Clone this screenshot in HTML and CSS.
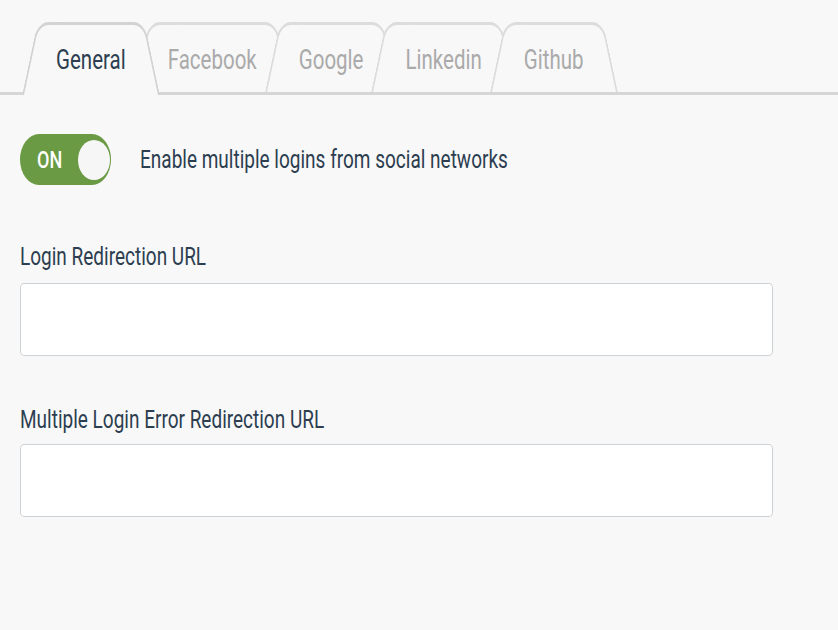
FILE: index.html
```html
<!DOCTYPE html>
<html lang="en">
<head>
  <meta charset="UTF-8">
  <meta name="viewport" content="width=device-width, initial-scale=1.0">
  <title>Social Login Settings</title>
  <link rel="stylesheet" href="styles.css">
</head>
<body>
  <nav class="tabs">
    <a href="#general" class="tab active"><span class="tall">General</span></a>
    <a href="#facebook" class="tab"><span class="tall">Facebook</span></a>
    <a href="#google" class="tab"><span class="tall">Google</span></a>
    <a href="#linkedin" class="tab"><span class="tall">Linkedin</span></a>
    <a href="#github" class="tab"><span class="tall">Github</span></a>
  </nav>

  <div class="settings">
    <div class="toggle-row">
      <label class="toggle">
        <span class="toggle-text tall">ON</span>
        <span class="knob"></span>
      </label>
      <span class="toggle-label tall">Enable multiple logins from social networks</span>
    </div>

    <div class="field">
      <label for="login-url"><span class="tall">Login Redirection URL</span></label>
      <input type="text" id="login-url">
    </div>

    <div class="field">
      <label for="error-url"><span class="tall">Multiple Login Error Redirection URL</span></label>
      <input type="text" id="error-url">
    </div>
  </div>
</body>
</html>
```

FILE: styles.css
```css
/* Reset default browser styles */
* {
  margin: 0;
  padding: 0;
  box-sizing: border-box;
}

body {
  background-color: #f8f8f8;
  font-family: Roboto, "Liberation Sans", sans-serif;
  color: #2c3e50;
}

/* the screenshot is stretched vertically, so the letters are too */
.tall {
  display: inline-block;
  transform: scaleY(1.333);
}

/* Tabs */
.tabs {
  display: flex;
  padding: 22px 0 0 22px;
  border-bottom: 3px solid #d6d6d6;
}

.tab {
  position: relative;
  z-index: 1;
  display: flex;
  align-items: center;
  height: 70px;
  padding: 5px 34px 0;
  margin-left: -26px;
  font-size: 20.5px;
  color: #aaaaaa;
  text-decoration: none;
}

.tab:first-child {
  margin-left: 0;
}

.tab::before,
.tab::after {
  content: "";
  position: absolute;
  z-index: -1;
  top: 0;
  bottom: 0;
  width: 60%;
  background-color: #f8f8f8;
  border-top: 3px solid #dcdcdc;
}

.tab::before {
  left: 0;
  border-left: 2px solid #dcdcdc;
  border-top-left-radius: 11px 15px;
  transform: skewX(-12deg);
  transform-origin: bottom left;
}

.tab::after {
  right: 0;
  border-right: 2px solid #dcdcdc;
  border-top-right-radius: 11px 15px;
  transform: skewX(12deg);
  transform-origin: bottom right;
}

.tab.active {
  z-index: 2;
  color: #2c3e50;
}

.tab.active::before,
.tab.active::after {
  bottom: -3px;
  border-color: #d3d3d3;
}

/* Settings */
.settings {
  padding: 39px 65px 0 20px;
}

.toggle-row {
  display: flex;
  align-items: center;
  gap: 29px;
}

.toggle {
  display: flex;
  align-items: center;
  justify-content: space-between;
  width: 91px;
  height: 51px;
  padding: 0 1px 0 17px;
  border-radius: 19px / 25.5px;
  background-color: #6a9a44;
}

.toggle-text {
  color: #fff;
  font-size: 18px;
  font-weight: 500;
}

.knob {
  width: 32px;
  height: 40px;
  border-radius: 50%;
  background-color: #f6f6f6;
}

.toggle-label {
  font-size: 19px;
  line-height: 30px;
}

.field {
  margin-top: 57px;
}

.field + .field {
  margin-top: 49px;
}

.field label {
  display: block;
  font-size: 19px;
  line-height: 30px;
  margin-bottom: 11px;
}

.field + .field label {
  margin-bottom: 9px;
}

.field input {
  display: block;
  width: 753px;
  height: 73px;
  border: 1px solid #cdd2d6;
  border-width: 1.5px 1px;
  border-radius: 4px / 5px;
  background-color: #fff;
  font-family: inherit;
  font-size: 17px;
}
```
